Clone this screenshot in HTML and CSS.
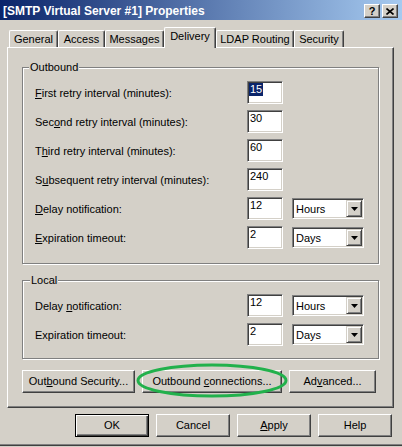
FILE: index.html
```html
<!DOCTYPE html>
<html>
<head>
<meta charset="utf-8">
<link rel="stylesheet" href="styles.css">
</head>
<body>
<div class="window">
  <div class="titlebar">
    <span class="title">[SMTP Virtual Server #1] Properties</span>
    <div class="tb-buttons">
      <span class="tb-btn">?</span>
      <span class="tb-btn"><svg width="8" height="7" viewBox="0 0 8 7"><path d="M0.5 0.5 L7.5 6.5 M7.5 0.5 L0.5 6.5" stroke="#000" stroke-width="1.6" fill="none"/></svg></span>
    </div>
  </div>
  <div class="tabs">
    <div class="tab t-general">General</div>
    <div class="tab t-access">Access</div>
    <div class="tab t-messages">Messages</div>
    <div class="tab t-delivery active">Delivery</div>
    <div class="tab t-ldap">LDAP Routing</div>
    <div class="tab t-security">Security</div>
  </div>
  <div class="panel">
    <fieldset class="group outbound">
      <legend>Outbound</legend>
      <div class="row"><span class="label"><u>F</u>irst retry interval (minutes):</span><span class="input"><span class="val sel">15</span></span></div>
      <div class="row"><span class="label">Sec<u>o</u>nd retry interval (minutes):</span><span class="input"><span class="val">30</span></span></div>
      <div class="row"><span class="label">T<u>h</u>ird retry interval (minutes):</span><span class="input"><span class="val">60</span></span></div>
      <div class="row"><span class="label">S<u>u</u>bsequent retry interval (minutes):</span><span class="input"><span class="val">240</span></span></div>
      <div class="row"><span class="label"><u>D</u>elay notification:</span><span class="input"><span class="val">12</span></span><span class="select"><span class="sel-text">Hours</span><span class="arrow"><svg width="7" height="4" viewBox="0 0 7 4"><path d="M0 0 H7 L3.5 4 Z" fill="#000"/></svg></span></span></div>
      <div class="row"><span class="label"><u>E</u>xpiration timeout:</span><span class="input"><span class="val">2</span></span><span class="select"><span class="sel-text">Days</span><span class="arrow"><svg width="7" height="4" viewBox="0 0 7 4"><path d="M0 0 H7 L3.5 4 Z" fill="#000"/></svg></span></span></div>
    </fieldset>
    <fieldset class="group local">
      <legend>Local</legend>
      <div class="row"><span class="label">Delay <u>n</u>otification:</span><span class="input"><span class="val">12</span></span><span class="select"><span class="sel-text">Hours</span><span class="arrow"><svg width="7" height="4" viewBox="0 0 7 4"><path d="M0 0 H7 L3.5 4 Z" fill="#000"/></svg></span></span></div>
      <div class="row"><span class="label">Expiration timeout:</span><span class="input"><span class="val">2</span></span><span class="select"><span class="sel-text">Days</span><span class="arrow"><svg width="7" height="4" viewBox="0 0 7 4"><path d="M0 0 H7 L3.5 4 Z" fill="#000"/></svg></span></span></div>
    </fieldset>
    <div class="actions">
      <span class="btn b-security"><span>Out<u>b</u>ound Security...</span></span>
      <span class="btn b-connections"><span>Outbound <u>c</u>onnections...</span></span>
      <span class="btn b-advanced"><span>Ad<u>v</u>anced...</span></span>
    </div>
  </div>
  <div class="footer">
    <span class="btn b-foot default"><span>OK</span></span>
    <span class="btn b-foot"><span>Cancel</span></span>
    <span class="btn b-foot"><span><u>A</u>pply</span></span>
    <span class="btn b-foot"><span>Help</span></span>
  </div>
  <svg class="annotation" width="152" height="35" viewBox="0 0 152 35"><ellipse cx="76" cy="17.5" rx="74" ry="15.5" fill="none" stroke="#22b14c" stroke-width="3"/></svg>
</div>
</body>
</html>
```
FILE: styles.css
```css
* { box-sizing: border-box; }
html, body { margin: 0; padding: 0; background: #d4d0c8; }
body { font-family: "Liberation Sans", Arial, sans-serif; font-size: 11px; line-height: 13px; color: #000; }
u { text-decoration: underline; text-underline-offset: 1px; }

.window {
  position: relative;
  width: 402px;
  height: 446px;
  background: #d4d0c8;
  border-bottom: 1px solid #404040;
  box-shadow: inset 0 -1px 0 #808080;
}

.titlebar {
  height: 20px;
  background: linear-gradient(to right, #0a246a, #a6caf0);
  display: flex;
  align-items: center;
  justify-content: space-between;
  padding: 0 4px 0 3px;
}
.title { color: #fff; font-weight: bold; font-size: 12px; line-height: 14px; padding-top: 1px; }
.tb-buttons { display: flex; gap: 2px; padding-top: 2px; }
.tb-btn {
  width: 16px; height: 14px;
  background: #d4d0c8;
  border: 1px solid; border-color: #fff #404040 #404040 #fff;
  box-shadow: inset -1px -1px 0 #808080;
  display: flex; align-items: center; justify-content: center;
  font-weight: bold; font-size: 11px; line-height: 11px;
}

.tabs {
  display: flex;
  align-items: flex-end;
  height: 27px;
  padding-left: 9px;
}
.tab {
  height: 17px;
  border-top: 1px solid #fff;
  border-left: 1px solid #fff;
  border-right: 1px solid #404040;
  box-shadow: inset -1px 0 0 #808080;
  border-radius: 2px 2px 0 0;
  text-align: center;
  padding-top: 2px;
  background: #d4d0c8;
}
.tab.active {
  height: 21px;
  margin-bottom: -1px;
  position: relative;
  z-index: 1;
  padding-top: 2px;
}
.t-general { width: 49px; }
.t-access { width: 47px; }
.t-messages { width: 59px; }
.t-delivery { width: 52px; }
.t-ldap { width: 78px; }
.t-security { width: 50px; }

.panel {
  margin-left: 7px;
  width: 387px;
  height: 361px;
  border: 1px solid;
  border-color: #fff #404040 #404040 #fff;
  box-shadow: inset -1px -1px 0 #808080;
  padding: 13px 14px 0 14px;
}

.group {
  margin: 0;
  border: 1px solid #808080;
  box-shadow: 1px 1px 0 #fff, inset 1px 1px 0 #fff;
  padding: 7px 0 14px 12px;
  display: flex;
  flex-direction: column;
  gap: 6px;
  min-width: 0;
}
.group legend {
  margin-left: -6px;
  padding: 0 1px;
  line-height: 13px;
  background: #d4d0c8;
}
.group.local { margin-top: 10px; padding-bottom: 12px; }
.group.local legend { margin-left: -5px; }

.row { display: flex; align-items: center; height: 23px; }
.label { width: 212px; flex: none; padding-top: 1px; }

.input {
  width: 36px; height: 23px; flex: none;
  background: #fff;
  border: 1px solid; border-color: #808080 #fff #fff #808080;
  box-shadow: inset 1px 1px 0 #404040, inset -1px -1px 0 #d4d0c8;
  padding: 1px 0 0 1px;
}
.val { display: inline-block; padding: 0 1px; line-height: 13px; }
.val.sel { background: #0a246a; color: #fff; }

.select {
  margin-left: 9px;
  width: 72px; height: 21px; flex: none;
  background: #fff;
  border: 1px solid; border-color: #808080 #fff #fff #808080;
  box-shadow: inset 1px 1px 0 #404040, inset -1px -1px 0 #d4d0c8;
  padding: 1px;
  display: flex;
  align-items: stretch;
}
.sel-text { flex: 1; padding: 3px 0 0 2px; }
.arrow {
  width: 16px;
  border: 1px solid; border-color: #d4d0c8 #404040 #404040 #d4d0c8;
  box-shadow: inset 1px 1px 0 #fff, inset -1px -1px 0 #808080;
  background: #d4d0c8;
  display: flex; align-items: center; justify-content: center;
}

.btn {
  display: flex; align-items: center; justify-content: center;
  height: 23px; flex: none;
  background: #d4d0c8;
  border: 1px solid; border-color: #fff #404040 #404040 #fff;
  box-shadow: inset -1px -1px 0 #808080;
}
.btn.default {
  border: 1px solid #000;
  box-shadow: inset 1px 1px 0 #fff, inset -1px -1px 0 #404040, inset -2px -2px 0 #808080;
}

.actions { display: flex; gap: 7px; margin-top: 11px; }
.b-security { width: 113px; }
.b-connections { width: 140px; }
.b-advanced { width: 87px; }

.footer {
  display: flex;
  justify-content: flex-end;
  gap: 7px;
  margin-top: 6px;
  padding-right: 10px;
}
.b-foot { width: 74px; }

.annotation {
  position: absolute;
  left: 136px;
  top: 363px;
}
```
